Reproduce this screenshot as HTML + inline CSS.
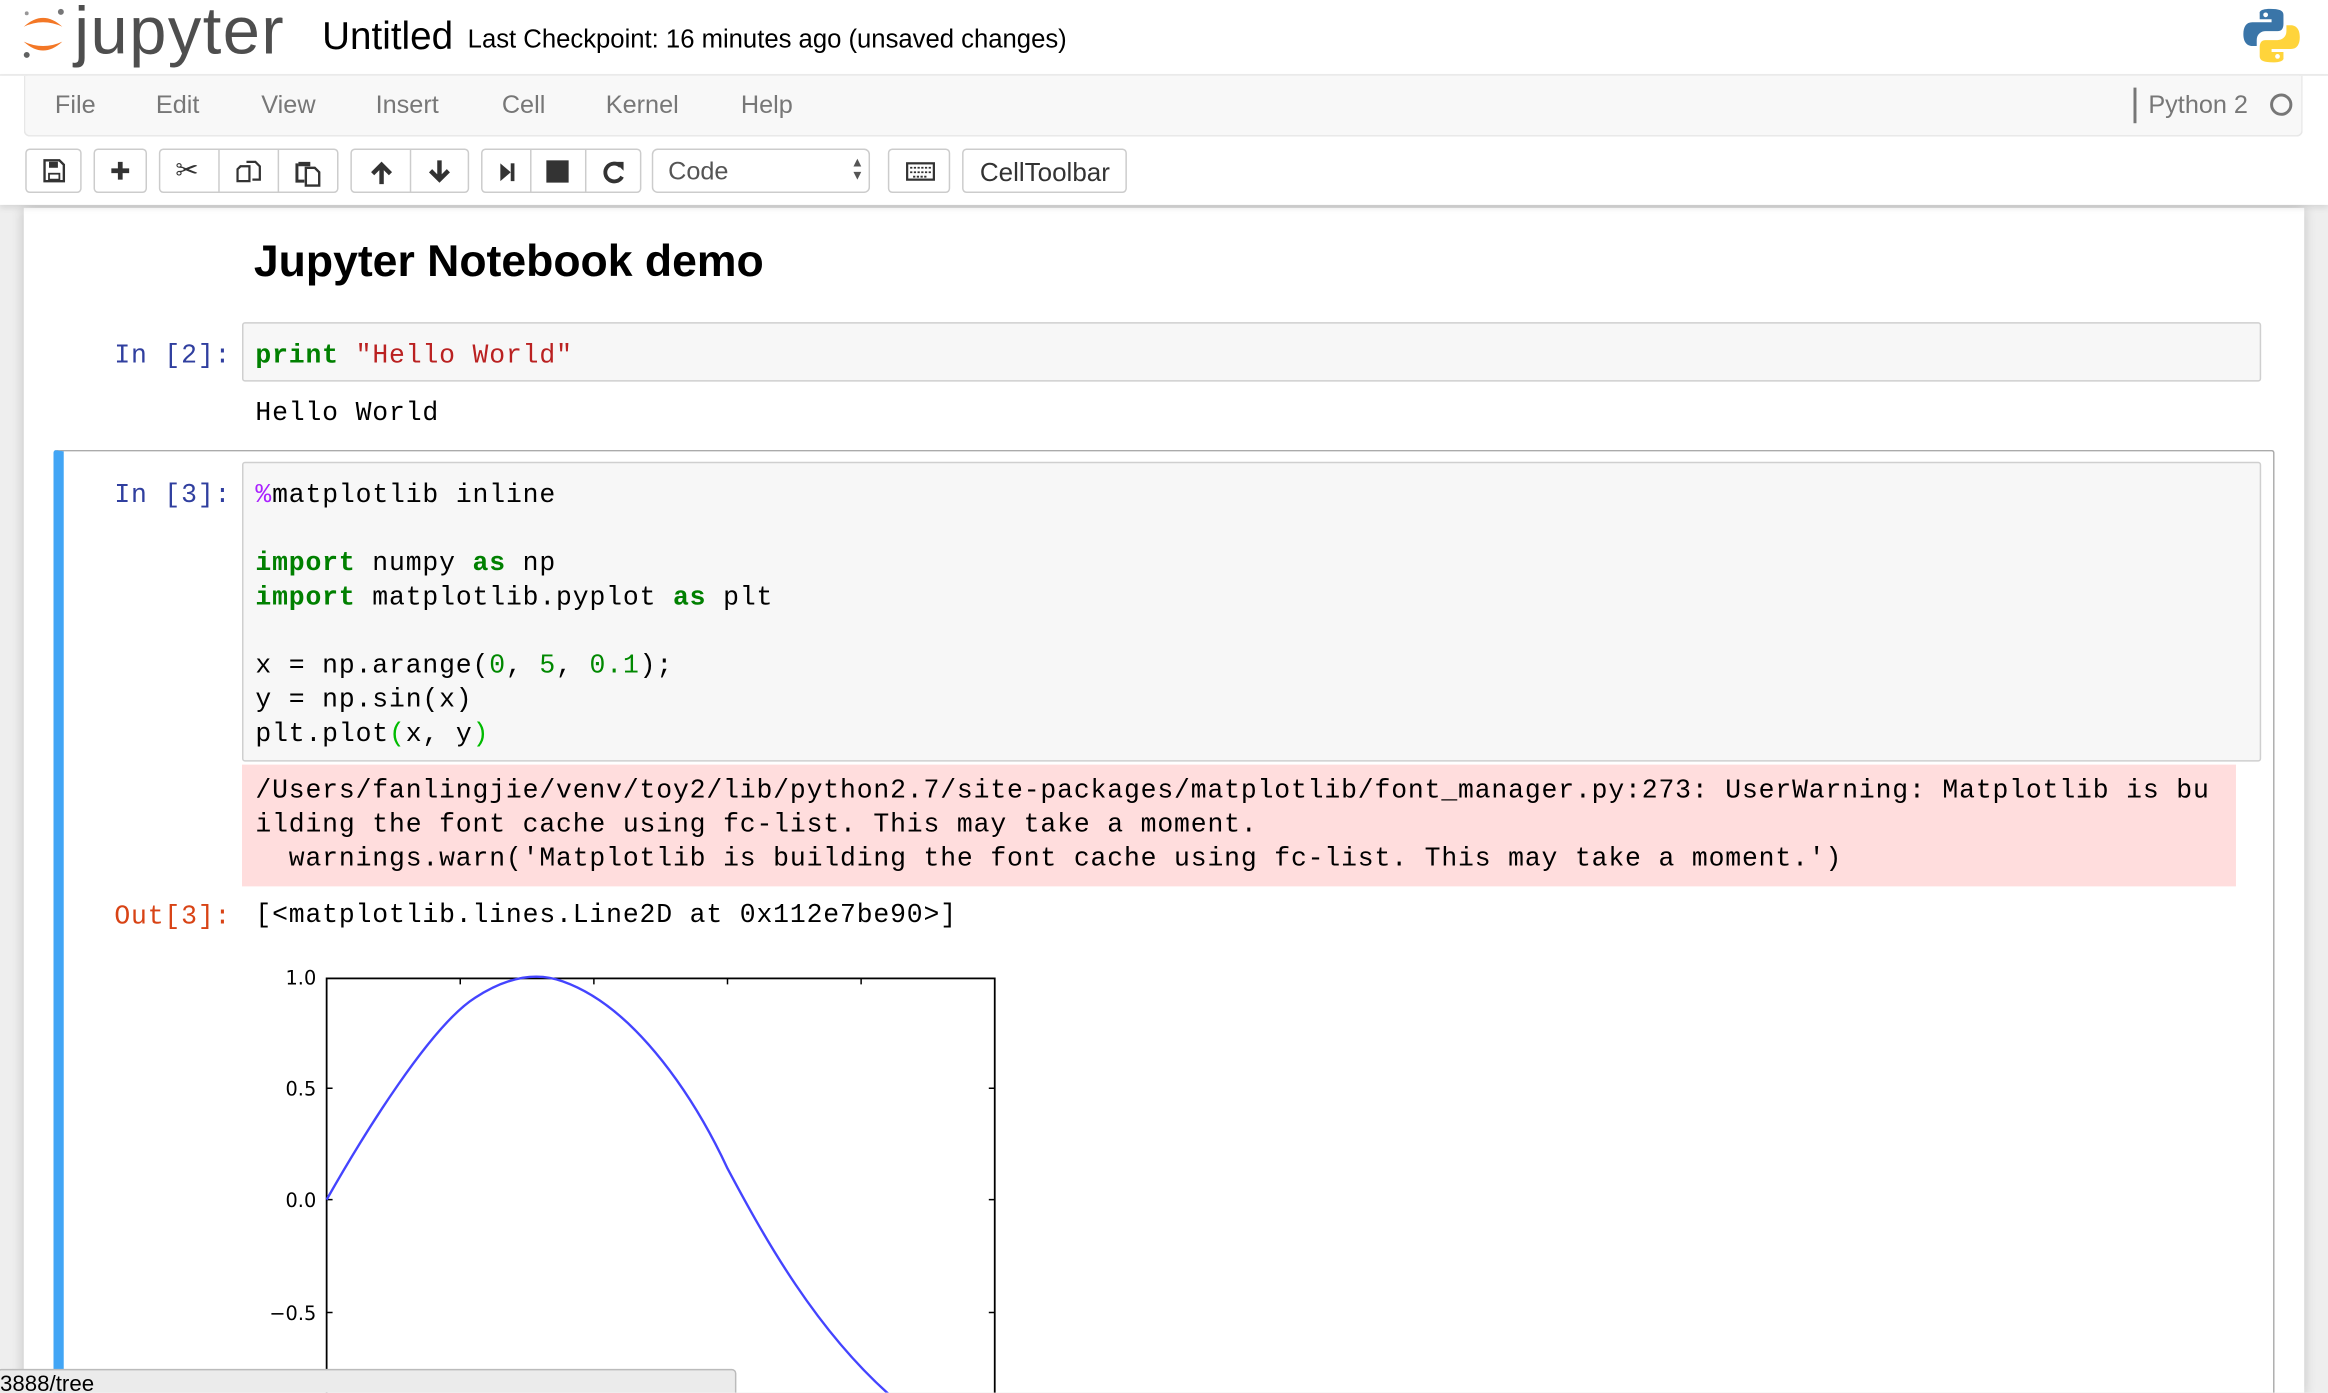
<!DOCTYPE html>
<html><head><meta charset="utf-8"><style>
html,body{margin:0;padding:0;width:2328px;height:1392px;overflow:hidden;background:#eee;}
#s{position:absolute;left:0;top:0;width:1568px;height:938px;transform:scale(1.48469);transform-origin:0 0;background:#eee;font-family:"Liberation Sans",sans-serif;overflow:hidden;}
.a{position:absolute;}
.mono{font-family:"Liberation Mono",monospace;font-size:17.8px;letter-spacing:0.58px;line-height:23px;white-space:pre;color:#000;}
.btn{position:absolute;top:100px;height:30px;border:1px solid #ccc;border-radius:3px;background:#fff;box-sizing:border-box;}
.sep{position:absolute;top:0;bottom:0;width:1px;background:#ccc;}
.k{color:#008000;font-weight:bold}.n{color:#080}.p{color:#0b0}
</style></head><body><div id="s">
<div class="a" style="left:0;top:0;width:1568px;height:50px;background:#fff;border-bottom:1px solid #e7e7e7"></div>
<svg class="a" style="left:14px;top:3px" width="32" height="42" viewBox="0 0 32 42">
<path d="M2 15 Q15 3 28 15 Q15 9 2 15Z" fill="#f37726"/>
<path d="M2 25 Q15 37 28 25 Q15 31 2 25Z" fill="#f37726"/>
<circle cx="27" cy="5" r="2" fill="#767677"/><circle cx="4" cy="34" r="2" fill="#616262"/><circle cx="4" cy="6" r="1.3" fill="#989798"/>
</svg>
<div class="a" style="left:50px;top:-5px;font-size:45px;color:#4e4e4e;letter-spacing:1px">jupyter</div>
<div class="a" style="left:217px;top:9px;font-size:26px;color:#000">Untitled</div>
<div class="a" style="left:315px;top:16px;font-size:17.3px;color:#000">Last Checkpoint: 16 minutes ago (unsaved changes)</div>
<svg class="a" style="left:1510px;top:4px" width="40" height="40" viewBox="0 0 40 40">
<path d="M19 2 C11 2 12 5 12 5 V9 H20 V11 H7 C3 11 1 14 1 19 C1 25 4 27 7 27 H10 V23 C10 19 13 17 16 17 H24 C27 17 28 15 28 12 V6 C28 3 25 2 19 2Z" fill="#3a75a8"/>
<path d="M21 38 C29 38 28 35 28 35 V31 H20 V29 H33 C37 29 39 26 39 21 C39 15 36 13 33 13 H30 V17 C30 21 27 23 24 23 H16 C13 23 12 25 12 28 V34 C12 37 15 38 21 38Z" fill="#ffd43b"/>
<circle cx="16" cy="6" r="1.6" fill="#fff"/><circle cx="24" cy="34" r="1.6" fill="#fff"/>
</svg>
<div class="a" style="left:16px;top:140px;width:1536px;height:800px;background:#fff;box-shadow:0 0 8px rgba(0,0,0,.2)"></div>
<div class="a" style="left:0;top:51px;width:1568px;height:87px;background:#fff;box-shadow:0 2px 4px rgba(0,0,0,.1)"></div>
<div class="a" style="left:16px;top:51px;width:1535px;height:41px;background:#f8f8f8;border:1px solid #e7e7e7;border-top:none;border-radius:0 0 4px 4px;box-sizing:border-box"></div>
<div class="a" style="top:61px;font-size:17px;color:#777;left:37px">File</div>
<div class="a" style="top:61px;font-size:17px;color:#777;left:105px">Edit</div>
<div class="a" style="top:61px;font-size:17px;color:#777;left:176px">View</div>
<div class="a" style="top:61px;font-size:17px;color:#777;left:253px">Insert</div>
<div class="a" style="top:61px;font-size:17px;color:#777;left:338px">Cell</div>
<div class="a" style="top:61px;font-size:17px;color:#777;left:408px">Kernel</div>
<div class="a" style="top:61px;font-size:17px;color:#777;left:499px">Help</div>
<div class="a" style="left:1437px;top:59px;width:2px;height:24px;background:#777"></div>
<div class="a" style="top:61px;font-size:17px;color:#777;left:1447px">Python 2</div>
<div class="a" style="left:1529px;top:63px;width:11px;height:11px;border:2px solid #777;border-radius:50%"></div>
<div class="btn" style="left:17px;width:38px"><svg width="36" height="28" viewBox="0 0 36 28"><path d="M12 7h10l3 3v11H12z" fill="none" stroke="#333" stroke-width="1.6"/><rect x="15" y="8" width="6" height="4" fill="#333"/><rect x="15" y="16" width="7" height="4" fill="none" stroke="#333" stroke-width="1.2"/></svg></div>
<div class="btn" style="left:63px;width:36px"><svg width="34" height="28" viewBox="0 0 34 28"><path d="M17 8v12M11 14h12" stroke="#333" stroke-width="3.2"/></svg></div>
<div class="btn" style="left:107px;width:121px"><div class="sep" style="left:39px"></div><div class="sep" style="left:79px"></div>
<div class="a" style="left:10px;top:3px;font-size:19px;color:#333">✂</div>
<svg class="a" style="left:49px;top:5px" width="22" height="20"><path d="M5 6h6v10H3V8zM9 3h6l3 3v9h-5" fill="none" stroke="#333" stroke-width="1.5"/></svg>
<svg class="a" style="left:89px;top:5px" width="22" height="20"><path d="M4 3h8v3H4z" fill="#333"/><path d="M3 4v12h5" stroke="#333" stroke-width="2" fill="none"/><path d="M9 7h6l3 3v9H9z" fill="#fff" stroke="#333" stroke-width="1.6"/></svg></div>
<div class="btn" style="left:236px;width:80px"><div class="sep" style="left:39px"></div>
<svg class="a" style="left:10px;top:6px" width="20" height="18"><path d="M10 17V4M4 10l6-6 6 6" stroke="#333" stroke-width="3" fill="none"/></svg>
<svg class="a" style="left:49px;top:6px" width="20" height="18"><path d="M10 1v13M4 8l6 6 6-6" stroke="#333" stroke-width="3" fill="none"/></svg></div>
<div class="btn" style="left:324px;width:108px"><div class="sep" style="left:32px"></div><div class="sep" style="left:69px"></div>
<svg class="a" style="left:8px;top:6px" width="18" height="18"><path d="M4 3l7 6-7 6z" fill="#333"/><rect x="11" y="3" width="2.5" height="12" fill="#333"/></svg>
<div class="a" style="left:43px;top:7px;width:15px;height:15px;background:#333"></div>
<svg class="a" style="left:78px;top:5px" width="20" height="20"><path d="M15 6A6 6 0 1 0 16 13" stroke="#333" stroke-width="2.6" fill="none"/><path d="M11 3h6v6z" fill="#333"/></svg></div>
<div class="btn" style="left:439px;width:147px;border-radius:4px"><div class="a" style="left:10px;top:5px;font-size:17px;color:#555">Code</div><div class="a" style="left:133px;top:4px;font-size:9px;color:#555;line-height:9px">▲<br>▼</div></div>
<div class="btn" style="left:598px;width:42px"><svg width="40" height="28"><rect x="12" y="9" width="18" height="11" fill="none" stroke="#333" stroke-width="1.5"/><path d="M14 12h14M14 15h14M16 18h10" stroke="#333" stroke-width="1.2" stroke-dasharray="1.5 1"/></svg></div>
<div class="btn" style="left:648px;width:111px"><div class="a" style="left:11px;top:5px;font-size:17.5px;color:#333">CellToolbar</div></div>
<div class="a" style="left:171px;top:160px;font-size:30px;font-weight:bold;color:#000">Jupyter Notebook demo</div>
<div class="a mono" style="left:77px;top:229px;color:#303f9f">In [2]:</div>
<div class="a" style="left:163px;top:217px;width:1360px;height:40px;background:#f7f7f7;border:1px solid #cfcfcf;border-radius:2px;box-sizing:border-box"></div>
<div class="a mono" style="left:172px;top:229px"><span class="k">print</span> <span style="color:#ba2121">"Hello World"</span></div>
<div class="a mono" style="left:172px;top:268px">Hello World</div>
<div class="a" style="left:36px;top:303px;width:1496px;height:660px;border:1px solid #ababab;border-left:7px solid #42a5f5;border-radius:2px;box-sizing:border-box"></div>
<div class="a mono" style="left:77px;top:323px;color:#303f9f">In [3]:</div>
<div class="a" style="left:163px;top:311px;width:1360px;height:202px;background:#f7f7f7;border:1px solid #cfcfcf;border-radius:2px;box-sizing:border-box"></div>
<div class="a mono" style="left:172px;top:323px"><span style="color:#aa22ff">%</span>matplotlib inline

<span class="k">import</span> numpy <span class="k">as</span> np
<span class="k">import</span> matplotlib.pyplot <span class="k">as</span> plt

x = np.arange(<span class="n">0</span>, <span class="n">5</span>, <span class="n">0.1</span>);
y = np.sin(x)
plt.plot<span class="p">(</span>x, y<span class="p">)</span></div>
<div class="a" style="left:163px;top:515px;width:1343px;height:82px;background:#fdd"></div>
<div class="a mono" style="left:172px;top:522px">/Users/fanlingjie/venv/toy2/lib/python2.7/site-packages/matplotlib/font_manager.py:273: UserWarning: Matplotlib is bu
ilding the font cache using fc-list. This may take a moment.
  warnings.warn('Matplotlib is building the font cache using fc-list. This may take a moment.')</div>
<div class="a mono" style="left:77px;top:607px;color:#d84315">Out[3]:</div>
<div class="a mono" style="left:172px;top:606px">[&lt;matplotlib.lines.Line2D at 0x112e7be90&gt;]</div>
<svg class="a" style="left:180px;top:640px" width="500" height="300" viewBox="180 640 500 300">
<rect x="220" y="659" width="450" height="300" fill="none" stroke="#000" stroke-width="1.2"/>
<g stroke="#000" stroke-width="1"><path d="M310 659v4M400 659v4M490 659v4M580 659v4M220 733h4M220 808h4M220 884h4M670 733h-4M670 808h-4M670 884h-4"/></g>
<path fill="none" stroke="#4444ff" stroke-width="1.6" d="M220,808 C245,764 290,691 320,672 C340,659 360,654 379,661 C430,679 470,744 490,787 C515,834 550,897 602,942"/>
<g font-family="DejaVu Sans,sans-serif" font-size="13" fill="#000" text-anchor="end"><text x="213" y="663">1.0</text><text x="213" y="738">0.5</text><text x="213" y="813">0.0</text><text x="213" y="889">−0.5</text></g>
</svg>
<div class="a" style="left:-2px;top:922px;width:498px;height:20px;background:#ebebeb;border:1px solid #bbb;border-radius:3px;box-sizing:border-box;font-size:15px;color:#000;padding-left:1px;line-height:20px">3888/tree</div>
</div></body></html>
